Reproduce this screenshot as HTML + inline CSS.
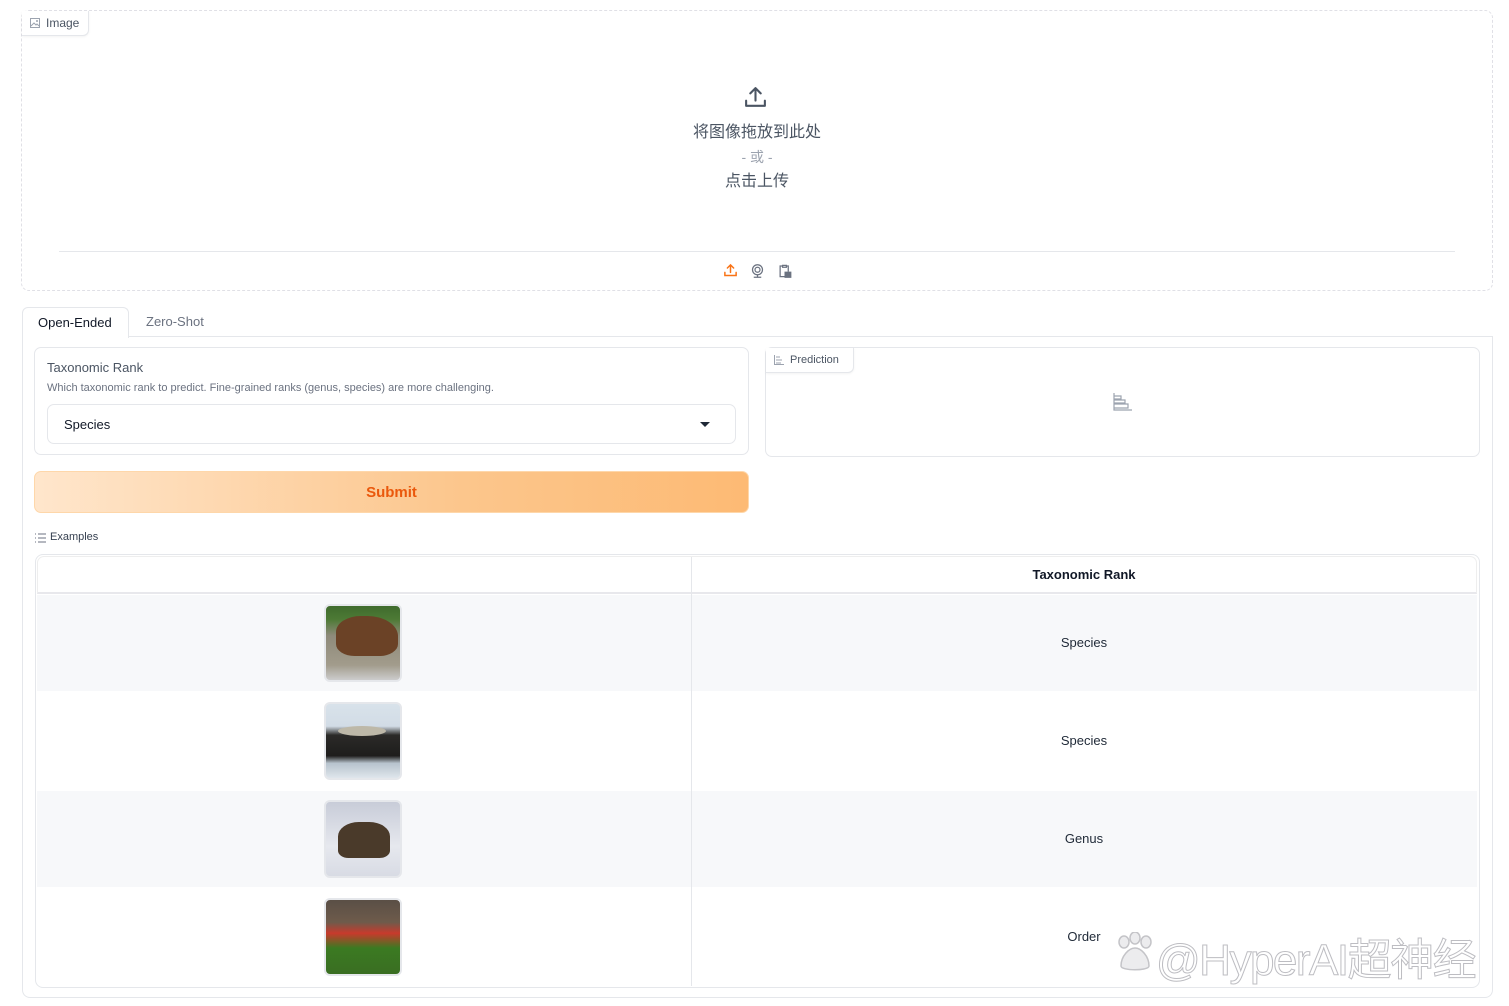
<!DOCTYPE html>
<html><head><meta charset="utf-8">
<style>
*{box-sizing:border-box;margin:0;padding:0}
body{width:1509px;height:1006px;background:#fff;font-family:"Liberation Sans","Noto Sans CJK SC",sans-serif;position:relative;overflow:hidden;color:#1f2937}
.abs{position:absolute}
.lbl{position:absolute;background:#fff;border:1px solid #e5e7eb;border-top:none;border-left:none;border-radius:0 0 6px 0;font-size:11px;color:#4b5563;display:flex;align-items:center;gap:6px;padding:0 8px;box-shadow:0 1px 2px rgba(0,0,0,.05)}
.cell{position:absolute;display:flex;align-items:center;justify-content:center;font-size:13px;color:#1f2937}
.thumb{position:absolute;left:324px;width:78px;height:78px;border-radius:6px;border:2px solid #e5e7eb;overflow:hidden}
</style></head><body>

<div class="abs" style="left:21px;top:10px;width:1472px;height:281px;border:1px dashed #e0e0e6;border-radius:8px"></div>
<div class="lbl" style="left:22px;top:11px;width:67px;height:25px;font-size:12px">
<svg width="10" height="10" viewBox="0 0 10 10"><rect x=".5" y=".5" width="9" height="9" fill="none" stroke="#9ca3af"/><path d="M1 8l3-3 2 2 1-1 2 2" fill="none" stroke="#9ca3af"/><circle cx="7" cy="3" r="1" fill="#9ca3af"/></svg>Image</div>
<svg class="abs" style="left:743px;top:85px" width="25" height="25" viewBox="0 0 24 24" fill="none" stroke="#4b5563" stroke-width="2" stroke-linecap="round" stroke-linejoin="round"><path d="M12 15V3M7 8l5-5 5 5M3 15v5h18v-5"/></svg>
<div class="abs" style="left:600px;top:121px;width:314px;text-align:center;font-size:16px;color:#4b5563;line-height:24px">将图像拖放到此处<br><span style="color:#9ca3af;font-size:14px">- 或 -</span><br>点击上传</div>
<div class="abs" style="left:59px;top:251px;width:1396px;height:1px;background:#e5e7eb"></div>
<svg class="abs" style="left:723px;top:263px" width="15" height="15" viewBox="0 0 24 24" fill="none" stroke="#f97316" stroke-width="2.4" stroke-linecap="round"><path d="M12 15V3M7 8l5-5 5 5M3 15v5h18v-5"/></svg>
<svg class="abs" style="left:750px;top:263px" width="15" height="16" viewBox="0 0 24 24" fill="none" stroke="#6b7280" stroke-width="2"><circle cx="12" cy="10" r="8"/><circle cx="12" cy="10" r="4"/><path d="M6 22h12M12 18v4"/></svg>
<svg class="abs" style="left:777px;top:263px" width="15" height="16" viewBox="0 0 24 24" fill="none" stroke="#6b7280" stroke-width="2"><path d="M9 3h6v3H9zM15 4h3v9M9 4H5v17h7"/><rect x="13" y="14" width="9" height="8" fill="#6b7280"/></svg>

<div class="abs" style="left:22px;top:336px;width:1471px;height:662px;border:1px solid #e5e7eb;border-top:none;border-radius:0 0 8px 8px"></div>
<div class="abs" style="left:128px;top:336px;width:1365px;height:1px;background:#e5e7eb"></div>
<div class="abs" style="left:22px;top:307px;width:107px;height:31px;border:1px solid #e5e7eb;border-bottom:none;border-radius:6px 6px 0 0;background:#fff;font-size:13px;color:#111827;padding:7px 0 0 15px">Open-Ended</div>
<div class="abs" style="left:146px;top:314px;font-size:13px;color:#6b7280">Zero-Shot</div>

<div class="abs" style="left:34px;top:347px;width:715px;height:108px;border:1px solid #e5e7eb;border-radius:7px"></div>
<div class="abs" style="left:47px;top:360px;font-size:13px;color:#4b5563">Taxonomic Rank</div>
<div class="abs" style="left:47px;top:382px;font-size:11px;color:#6b7280">Which taxonomic rank to predict. Fine-grained ranks (genus, species) are more challenging.</div>
<div class="abs" style="left:47px;top:404px;width:689px;height:40px;border:1px solid #e5e7eb;border-radius:7px;font-size:13px;color:#111827;padding:12px 0 0 16px">Species</div>
<div class="abs" style="left:700px;top:422px;width:0;height:0;border-left:5px solid transparent;border-right:5px solid transparent;border-top:5px solid #1f2937"></div>

<div class="abs" style="left:34px;top:471px;width:715px;height:42px;border-radius:7px;background:linear-gradient(90deg,#ffe6cc,#fcc68c 60%,#fdba74);border:1px solid #fed7aa;font-size:15px;font-weight:bold;color:#ea580c;text-align:center;line-height:42px">Submit</div>

<div class="abs" style="left:765px;top:347px;width:715px;height:110px;border:1px solid #e5e7eb;border-radius:7px"></div>
<div class="lbl" style="left:766px;top:348px;width:88px;height:25px;border-radius:0 0 6px 0">
<svg width="10" height="10" viewBox="0 0 10 10" fill="none" stroke="#9ca3af"><path d="M.5 0v9.5H10M2 2h4M2 5h6M2 8h5"/></svg>Prediction</div>
<svg class="abs" style="left:1113px;top:393px" width="19" height="18" viewBox="0 0 19 18" fill="none" stroke="#9ca3af" stroke-width="1.2"><path d="M1 0v17h18M1 3h7v3H1M1 7h11v3H1M1 11h14v4H1"/></svg>

<svg class="abs" style="left:35px;top:533px" width="11" height="10" viewBox="0 0 11 10" stroke="#6b7280"><path d="M0 1h1M3 1h8M0 5h1M3 5h8M0 9h1M3 9h8"/></svg>
<div class="abs" style="left:50px;top:531px;font-size:11px;color:#374151">Examples</div>
<div class="abs" style="left:35px;top:554px;width:1445px;height:434px;border:1px solid #e5e7eb;border-radius:8px"></div>
<div class="abs" style="left:37px;top:556px;width:1440px;height:38px;border:1px solid #eee;border-bottom:2px solid #e8e8ec;border-radius:7px 7px 0 0"></div>
<div class="cell" style="left:691px;top:556px;width:786px;height:36px;font-weight:bold;font-size:13px;color:#111827">Taxonomic Rank</div>
<div class="abs" style="left:37px;top:595px;width:1440px;height:96px;background:#f7f8fa"></div>
<div class="abs" style="left:37px;top:791px;width:1440px;height:96px;background:#f7f8fa"></div>
<div class="abs" style="left:691px;top:557px;width:1px;height:429px;background:#e5e7eb"></div>
<div class="cell" style="left:691px;top:594px;width:786px;height:96px">Species</div>
<div class="cell" style="left:691px;top:692px;width:786px;height:96px">Species</div>
<div class="cell" style="left:691px;top:790px;width:786px;height:96px">Genus</div>
<div class="cell" style="left:691px;top:888px;width:786px;height:96px">Order</div>

<div class="thumb" style="top:604px;background:linear-gradient(180deg,#3f6b2d 0%,#4d7a35 18%,#8e8a7a 40%,#a29c8c 80%,#ccc 100%)">
<div class="abs" style="left:10px;top:10px;width:62px;height:40px;background:#6b4226;border-radius:40% 50% 30% 30%"></div></div>
<div class="thumb" style="top:702px;background:linear-gradient(180deg,#d8e2ea 0%,#d2dce6 30%,#2b2a28 42%,#1e1d1c 70%,#b7c3cd 80%,#dfe6ec 100%)">
<div class="abs" style="left:12px;top:22px;width:48px;height:10px;background:#bdb8a8;border-radius:50%"></div></div>
<div class="thumb" style="top:800px;background:linear-gradient(180deg,#c8ccd8,#e6e8ee 60%,#d8dbe4)">
<div class="abs" style="left:12px;top:20px;width:52px;height:36px;background:#4a3a2a;border-radius:40% 40% 20% 20%"></div></div>
<div class="thumb" style="top:898px;background:linear-gradient(180deg,#5a4f46 0%,#6e5b4b 30%,#c83a2c 45%,#3b7a22 65%,#3a6e22 100%)"></div>

<svg class="abs" style="left:1116px;top:932px" width="38" height="40" viewBox="0 0 38 40" fill="#ececee" stroke="#c4c4c8" stroke-width="1.5"><ellipse cx="8" cy="10" rx="5" ry="6"/><ellipse cx="19" cy="6" rx="5" ry="6"/><ellipse cx="30" cy="10" rx="5" ry="6"/><path d="M5 34c0-10 8-18 14-18s14 8 14 18c0 5-28 5-28 0z"/></svg>
<div class="abs" style="left:1156px;top:924px;font-size:44px;color:#fff;-webkit-text-stroke:1px #bdbdc2;letter-spacing:-1.5px;white-space:nowrap">@HyperAI超神经</div>
</body></html>
